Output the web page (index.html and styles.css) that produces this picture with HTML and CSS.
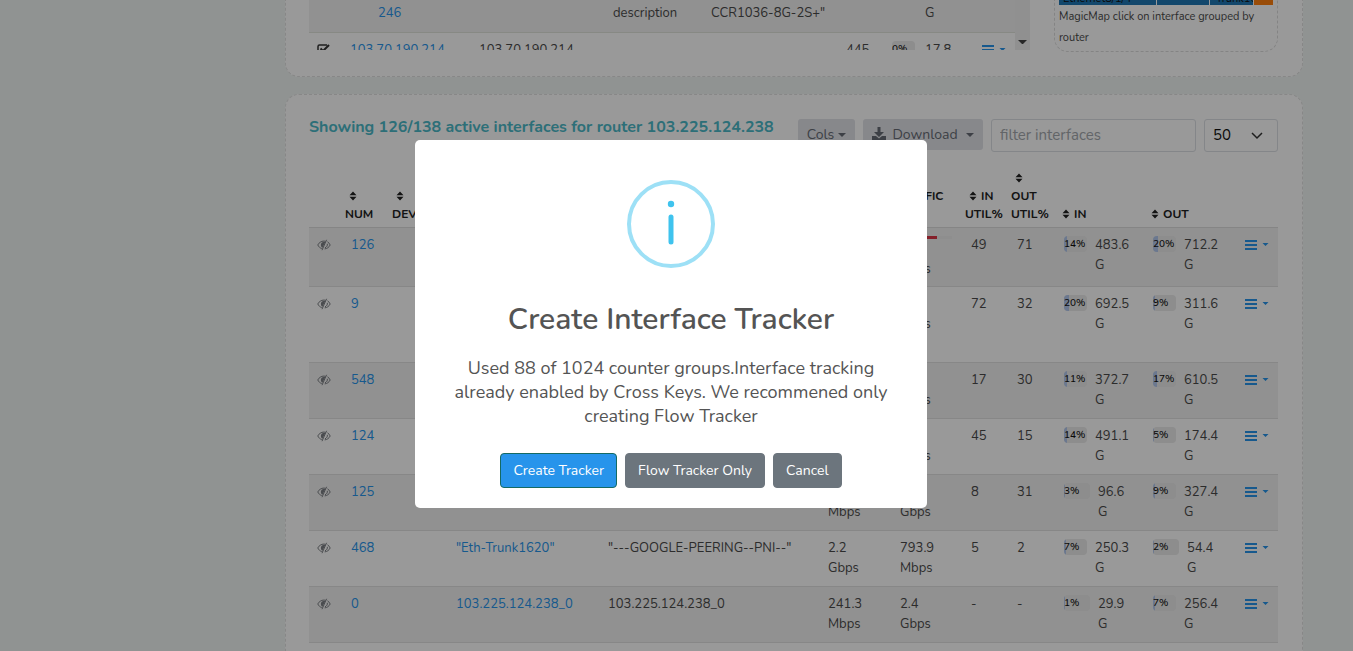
FILE: index.html
```html
<!DOCTYPE html>
<html lang="en">
<head>
<meta charset="utf-8">
<title>Interfaces</title>
<link rel="stylesheet" href="styles.css">
</head>
<body>
<svg class="defs" aria-hidden="true">
  <symbol id="eye" viewBox="0 0 14 12"><path d="M8.500 2.300C5.200 1.400 2 3.400.8 6c.9 1.800 2.200 3 3.900 3.600M10.500 2.800C11.700 3.500 12.500 4.600 13.200 6c-1.200 2.300-3.100 3.700-5.500 3.900" fill="none" stroke="currentColor"/><path d="M8.600 2.800C5.500 2.400 3.500 4.200 3.900 6.400c.2 1.100.8 1.900 1.500 2.300z" fill="currentColor"/><path d="M10.300 4.800c.4 1.800-.6 3.300-2.300 4" fill="none" stroke="currentColor"/><path d="M9.600.8 5 11.200" stroke="currentColor"/></symbol>
  <symbol id="sort" viewBox="0 0 8 10"><path d="M4 .5 7.500 4.200H.5zM4 9.500.5 5.800h7z" fill="currentColor"/></symbol>
  <symbol id="menu" viewBox="0 0 24 12"><path d="M0 1h12v2H0zM0 5h12v2H0zM0 9h12v2H0zM17.500 4h6l-3 3z" fill="currentColor"/></symbol>
</svg>
<main class="page">
  <section class="card card-top">
    <div class="scroller">
      <div class="scroll-rows">
        <div class="top-row striped"><a class="c-ip indent" href="#">246</a><span class="c-name right">description</span><span class="c-desc">CCR1036-8G-2S+"</span><span class="c-vol last">G</span></div>
        <div class="top-row"><svg class="check" viewBox="0 0 13 13"><path d="M11 7v3.500A1.500 1.500 0 0 1 9.500 12h-7A1.500 1.500 0 0 1 1 10.500v-7A1.500 1.500 0 0 1 2.500 2H10" fill="none" stroke="currentColor" stroke-width="1.500"/><path d="m3.500 5.500 2.500 2.500 6-6" fill="none" stroke="currentColor" stroke-width="2"/></svg><a class="c-ip" href="#">103.70.190.214</a><span class="c-name">103.70.190.214</span><span class="c-num">445</span><span class="badge"><b>0%</b></span><span class="c-vol">17.8</span><a class="menu" href="#" aria-label="Row menu"><svg><use href="#menu"/></svg></a></div>
      </div>
      <div class="scrollbar"><i></i></div>
    </div>
    <aside class="map">
      <div class="treemap"><span class="t1">Ethernet8/1/4"</span><span class="t2"></span><span class="t3">Trunk16</span><span class="t4"></span></div>
      <p>MagicMap click on interface grouped by router</p>
    </aside>
  </section>

  <section class="card card-main">
    <header class="toolbar">
      <h2>Showing 126/138 active interfaces for router 103.225.124.238</h2>
      <button class="tool" type="button">Cols<i class="caret"></i></button>
      <button class="tool download" type="button"><svg viewBox="0 0 14 14"><path d="M5.500 0h3v5H12L7 10 2 5h3.500z" fill="currentColor"/><path d="M0 9h4l3 2.500L10 9h4v4H0z" fill="currentColor"/></svg>Download<i class="caret"></i></button>
      <input class="filter" type="text" placeholder="filter interfaces" aria-label="Filter interfaces">
      <select class="count" aria-label="Rows per page"><option>50</option></select>
    </header>
    <table>
      <colgroup><col class="w-eye"><col class="w-num"><col class="w-dev"><col class="w-int"><col class="w-name"><col class="w-recv"><col class="w-xmit"><col class="w-inu"><col class="w-outu"><col class="w-in"><col class="w-out"><col class="w-menu"></colgroup>
      <thead><tr>
        <th></th>
        <th><svg class="sort above"><use href="#sort"/></svg>Num</th>
        <th><svg class="sort above"><use href="#sort"/></svg>Device</th>
        <th></th><th></th><th></th>
        <th class="traffic">Traffic<br>&nbsp;</th>
        <th><svg class="sort"><use href="#sort"/></svg>In<br>Util%</th>
        <th><svg class="sort above"><use href="#sort"/></svg>Out<br>Util%</th>
        <th><svg class="sort near"><use href="#sort"/></svg>In</th>
        <th><svg class="sort near"><use href="#sort"/></svg>Out</th>
        <th></th>
      </tr></thead>
      <tbody>
        <tr class="metered"><td><svg class="eye"><use href="#eye"/></svg></td><td><a href="#">126</a></td><td></td><td></td><td></td><td></td><td><div class="meter"><i></i></div><br>Gbps</td><td>49</td><td>71</td><td class="usage"><div><span class="badge"><i style="width:14%"></i><b>14%</b></span><span>483.6 G</span></div></td><td class="usage"><div><span class="badge"><i style="width:20%"></i><b>20%</b></span><span>712.2 G</span></div></td><td><a class="menu" href="#" aria-label="Row menu"><svg><use href="#menu"/></svg></a></td></tr>
        <tr class="tall"><td><svg class="eye"><use href="#eye"/></svg></td><td><a href="#">9</a></td><td></td><td></td><td></td><td></td><td><br>Gbps</td><td>72</td><td>32</td><td class="usage"><div><span class="badge"><i style="width:20%"></i><b>20%</b></span><span>692.5 G</span></div></td><td class="usage"><div><span class="badge"><i style="width:9%"></i><b>9%</b></span><span>311.6 G</span></div></td><td><a class="menu" href="#" aria-label="Row menu"><svg><use href="#menu"/></svg></a></td></tr>
        <tr><td><svg class="eye"><use href="#eye"/></svg></td><td><a href="#">548</a></td><td></td><td></td><td></td><td></td><td><br>Gbps</td><td>17</td><td>30</td><td class="usage"><div><span class="badge"><i style="width:11%"></i><b>11%</b></span><span>372.7 G</span></div></td><td class="usage"><div><span class="badge"><i style="width:17%"></i><b>17%</b></span><span>610.5 G</span></div></td><td><a class="menu" href="#" aria-label="Row menu"><svg><use href="#menu"/></svg></a></td></tr>
        <tr><td><svg class="eye"><use href="#eye"/></svg></td><td><a href="#">124</a></td><td></td><td></td><td></td><td></td><td><br>Gbps</td><td>45</td><td>15</td><td class="usage"><div><span class="badge"><i style="width:14%"></i><b>14%</b></span><span>491.1 G</span></div></td><td class="usage"><div><span class="badge"><i style="width:5%"></i><b>5%</b></span><span>174.4 G</span></div></td><td><a class="menu" href="#" aria-label="Row menu"><svg><use href="#menu"/></svg></a></td></tr>
        <tr><td><svg class="eye"><use href="#eye"/></svg></td><td><a href="#">125</a></td><td></td><td></td><td></td><td><br>Mbps</td><td><br>Gbps</td><td>8</td><td>31</td><td class="usage short"><div><span class="badge"><i style="width:3%"></i><b>3%</b></span><span>96.6 G</span></div></td><td class="usage"><div><span class="badge"><i style="width:9%"></i><b>9%</b></span><span>327.4 G</span></div></td><td><a class="menu" href="#" aria-label="Row menu"><svg><use href="#menu"/></svg></a></td></tr>
        <tr><td><svg class="eye"><use href="#eye"/></svg></td><td><a href="#">468</a></td><td></td><td><a href="#">"Eth-Trunk1620"</a></td><td>"---GOOGLE-PEERING--PNI--"</td><td>2.2<br>Gbps</td><td>793.9<br>Mbps</td><td>5</td><td>2</td><td class="usage"><div><span class="badge"><i style="width:7%"></i><b>7%</b></span><span>250.3 G</span></div></td><td class="usage short"><div><span class="badge"><i style="width:2%"></i><b>2%</b></span><span>54.4 G</span></div></td><td><a class="menu" href="#" aria-label="Row menu"><svg><use href="#menu"/></svg></a></td></tr>
        <tr><td><svg class="eye"><use href="#eye"/></svg></td><td><a href="#">0</a></td><td></td><td><a href="#">103.225.124.238_0</a></td><td>103.225.124.238_0</td><td>241.3<br>Mbps</td><td>2.4<br>Gbps</td><td>-</td><td>-</td><td class="usage short"><div><span class="badge"><i style="width:1%"></i><b>1%</b></span><span>29.9 G</span></div></td><td class="usage"><div><span class="badge"><i style="width:7%"></i><b>7%</b></span><span>256.4 G</span></div></td><td><a class="menu" href="#" aria-label="Row menu"><svg><use href="#menu"/></svg></a></td></tr>
      </tbody>
    </table>
  </section>
</main>

<div class="overlay">
  <div class="dialog" role="dialog" aria-modal="true" aria-labelledby="dialog-title">
    <svg class="info" viewBox="0 0 88 88"><circle cx="44" cy="44" r="42" fill="none" stroke="#9de0f6" stroke-width="4"/><circle cx="44" cy="24" r="3.200" fill="#3fc3ee"/><rect x="41.500" y="34.500" width="5" height="30" rx="2.500" fill="#3fc3ee"/></svg>
    <h1 id="dialog-title">Create Interface Tracker</h1>
    <p>Used 88 of 1024 counter groups.Interface tracking already enabled by Cross Keys. We recommened only creating Flow Tracker</p>
    <div class="actions">
      <button class="primary" type="button">Create Tracker</button>
      <button type="button">Flow Tracker Only</button>
      <button type="button">Cancel</button>
    </div>
  </div>
</div>
</body>
</html>
```

FILE: styles.css
```css
* { box-sizing: border-box; }
html, body { height: 100%; }
body {
  margin: 0;
  overflow: hidden;
  background: #f0f5f3;
  color: #4a4a4a;
  font: 13px/20px Nunito, Lato, "Open Sans", sans-serif;
}
a { color: #2794eb; text-decoration: none; }
button, input, select { font: inherit; }
.defs { position: absolute; width: 0; height: 0; }

.page { height: 100%; overflow: hidden; padding: 0 50px 0 285px; }
.card { background: #fff; border: 1px dashed #e2e2e2; border-radius: 14px; }

/* upper card */
.card-top {
  display: flex;
  justify-content: space-between;
  gap: 24px;
  padding: 0 24px 24px 23px;
  border-top: 0;
  border-radius: 0 0 14px 14px;
}
.scroller { display: flex; flex: 1; height: 50px; overflow: hidden; }
.scroll-rows { flex: 1; }
.top-row { display: flex; height: 33px; padding: 3px 0 0 8px; border-bottom: 1px solid #e2e4dc; }
.top-row + .top-row { padding-top: 7px; border: 0; }
.striped { background: #f2f2f2; }
.top-row .check { width: 13px; height: 13px; margin: 3px 20px 0 0; color: #333; }
.c-ip { width: 129px; }
.c-ip.indent { width: 296px; padding-left: 61px; }
.c-name { width: 367px; }
.c-name.right { width: 98px; }
.c-num { width: 46px; }
.c-desc { width: 214px; }
.c-vol { width: 67px; padding-left: 10px; }
.c-vol.last { padding-left: 0; }
.scrollbar { width: 15px; background: #f0f0f0; padding: 40px 3px 0; }
.scrollbar i { display: block; border: 4px solid transparent; border-top-color: #444; border-bottom: 0; }
.map {
  width: 224px;
  padding: 0 4px 3px;
  border: 1px dashed #ddd;
  border-top: 0;
  border-radius: 0 0 14px 14px;
  font-size: 11px;
  line-height: 21px;
}
.map p { margin: 1px 0 0; }
.treemap { display: flex; align-items: flex-end; gap: 1px; height: 5px; overflow: hidden; color: #111; font-size: 11px; line-height: 13px; }
.treemap span { height: 13px; background: #1f77b4; overflow: hidden; }
.treemap .t1 { flex: 0 0 97px; padding-left: 4px; }
.treemap .t2 { flex: 0 0 52px; }
.treemap .t3 { flex: 0 0 43px; padding-left: 6px; }
.treemap .t4 { flex: 1; background: #ff7f0e; }

/* interfaces card */
.card-main { margin-top: 17px; padding: 24px 24px 40px 23px; }
.toolbar { display: flex; align-items: flex-start; gap: 8px; margin-bottom: 17px; }
.toolbar h2 { flex: 1; margin: 0; color: #4bb9c8; font-size: 16px; line-height: 16px; white-space: nowrap; }
.tool {
  display: flex;
  align-items: center;
  justify-content: center;
  width: 57px;
  height: 31px;
  padding: 0;
  border: 0;
  border-radius: 3px;
  background: #e2e3e8;
  color: #666c75;
  font-size: 14px;
}
.tool.download { width: 120px; }
.download svg { width: 14px; height: 14px; margin: 0 6px 2px 0; }
.caret { margin-left: 4px; border: 4px solid transparent; border-top-color: currentColor; border-bottom: 0; }
.download .caret { margin-left: 8px; }
.filter, .count { height: 33px; border: 1px solid #dcdfe4; border-radius: 3px; background: #fff; font-size: 15px; }
.filter { width: 205px; padding: 0 8px 2px; }
.filter::placeholder { color: #a4a8ad; opacity: 1; }
.count {
  width: 74px;
  padding: 0 8px 2px;
  color: #111;
  appearance: none;
  background: #fff url("data:image/svg+xml,%3Csvg xmlns='http://www.w3.org/2000/svg' width='12' height='8'%3E%3Cpath d='m1 1 5 5 5-5' fill='none' stroke='%23333' stroke-width='1.500'/%3E%3C/svg%3E") no-repeat right 14px center;
}

table { width: 100%; table-layout: fixed; border-collapse: collapse; }
.w-eye { width: 34px; }
.w-num { width: 47px; }
.w-dev { width: 58px; }
.w-int { width: 152px; }
.w-recv { width: 72px; }
.w-xmit { width: 71px; }
.w-inu { width: 46px; }
.w-outu { width: 51px; }
.w-in { width: 89px; }
.w-out { width: 88px; }
.w-menu { width: 41px; }
th {
  padding: 0 2px 4px;
  border-bottom: 1px solid #dedede;
  color: #222;
  font-size: 12px;
  font-weight: 700;
  line-height: 18px;
  text-align: left;
  text-transform: uppercase;
  vertical-align: bottom;
  white-space: nowrap;
}
th.traffic { text-align: right; padding-right: 20px; }
.sort { width: 8px; height: 10px; margin: 0 4px; vertical-align: -1px; }
.sort.near { margin-left: 0; }
.sort.above { display: block; margin: 4px; }
td { height: 56px; padding: 7px 0 8px 8px; border-bottom: 1px solid #e2e2e2; vertical-align: top; white-space: nowrap; }
tbody tr:nth-child(odd) { background: #f2f2f2; }
.metered td { height: 59px; padding-bottom: 6px; }
.tall td { height: 76px; }
.eye { display: block; width: 14px; height: 12px; margin-top: 4px; color: #7c7f84; }
.meter { height: 3px; margin: 1px 11px 0 0; background: #ededed; }
.meter i { display: block; width: 72%; height: 3px; background: #dc3545; }
td.usage { padding-left: 4px; white-space: normal; }
.usage > div { display: flex; gap: 8px; width: 66px; }
.badge { display: block; position: relative; flex: none; width: 23px; height: 16px; margin-top: 1px; border-radius: 4px; background: #ebebeb; overflow: hidden; color: #111; font-size: 10px; line-height: 16px; }
.short .badge { width: 26px; }
.badge i { position: absolute; inset: 0 auto 0 0; background: #b3c8ee; }
.badge b { position: relative; font-weight: 500; }
.menu svg { display: block; width: 24px; height: 12px; margin-top: 4px; }

/* modal */
.overlay {
  position: fixed;
  inset: 0;
  display: flex;
  align-items: center;
  justify-content: center;
  padding: 0 11px 3px 0;
  background: rgba(0, 0, 0, .4);
}
.dialog { width: 512px; padding: 40px 30px 20px; border-radius: 5px; background: #fff; color: #545454; text-align: center; }
.info { display: block; width: 88px; height: 88px; margin: 0 auto 33px; }
.dialog h1 { margin: 0 0 17px; font-size: 30px; line-height: 38px; font-weight: 600; }
.dialog p { margin: 0 0 25px; font-size: 18px; line-height: 24px; }
.actions { display: flex; justify-content: center; gap: 8px; }
.actions button { height: 35px; padding: 0 12px; border: 1px solid #6c757d; border-radius: 4px; background: #6c757d; color: #fff; font-size: 14px; white-space: nowrap; }
.actions .primary { background: #2794eb; border-color: #156a63; }
```
